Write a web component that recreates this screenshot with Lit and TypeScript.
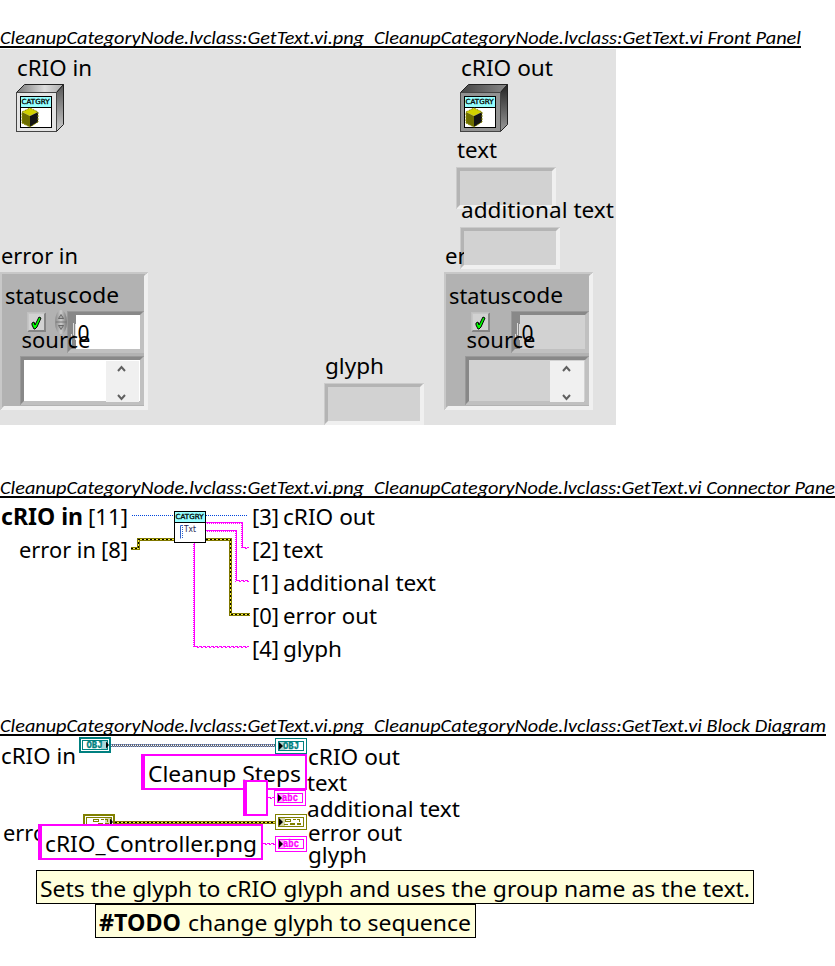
import { LitElement, html, svg, css } from "lit";
import { customElement } from "lit/decorators.js";

// One label: left edge, baseline, content, drawn width.
const t = (x: number, y: number, s: string, w: number, cls = "label") =>
  svg`<text class=${cls} x=${x} y=${y} textLength=${w} lengthAdjust="spacingAndGlyphs">${s}</text>`;

const rect = (x: number, y: number, w: number, h: number, fill: string) =>
  svg`<rect x=${x} y=${y} width=${w} height=${h} fill=${fill} />`;

// Sunken box with mitred edges: b is the edge thickness.
const bevel = (x: number, y: number, w: number, h: number, b: number, fill: string, dark: string, light: string, outer: string) => svg`
  ${rect(x, y, w, h, light)}
  <path fill=${dark} d="M${x} ${y}H${x + w}L${x + w - b} ${y + b}H${x + b}V${y + h - b}L${x} ${y + h}Z" />
  <path fill=${outer} d="M${x} ${y}H${x + w}L${x + w - 1} ${y + 1}H${x + 1}V${y + h - 1}L${x} ${y + h}Z" />
  ${rect(x + b, y + b, w - 2 * b, h - 2 * b, fill)}`;

const field = (x: number, y: number) => bevel(x, y, 100, 42, 4, "#d2d2d2", "#b4b4b4", "#f0f0f0", "#cbcbcb");

const classCube = (x: number, y: number, face: string, top: string) => svg`
  <g transform="translate(${x} ${y})">
    <path d="M.5 8.5L8.5 .5H47.5L40.5 8.5Z" fill="url(#${top})" stroke="#222" />
    <path d="M40.5 8.5L47.5 .5V40.5L40.5 47.5Z" fill="url(#${top}s)" stroke="#222" />
    <rect x=".5" y="8.5" width="40" height="39" fill=${face} stroke="#444" />
    <rect x="4.5" y="12.5" width="31" height="31" fill="#fff" stroke="#000" />
    <rect x="5" y="13" width="30" height="10" fill="#96ffff" />
    ${rect(5, 23, 30, 1, "#000")}
    ${t(5.5, 20, "CATGRY", 28, "tiny")}
    <path d="M6 28L14 24L22 28L14 32Z" fill="#d2d200" />
    <path d="M6 28L14 32V43L6 39Z" fill="#6e6e00" />
    <path d="M14 32L22 28V38L14 43Z" fill="#141414" />
    <path d="M6 28L14 24L22 28V38L14 43L6 39Z" fill="none" stroke="#8c8c00" stroke-dasharray="2 1" />
  </g>`;

const cluster = (x: number, output: boolean) => {
  const fill = output ? "#d2d2d2" : "#fff";
  const d = output ? 1 : 0;
  const w = 148 + d;
  return svg`
    ${bevel(x, 272, w, 138, 4, "#b2b2b2", "#b2b2b2", "#f0f0f0", "#c8c8c8")}
    ${rect(x, 272, w - 1, 2, "#c8c8c8")}${rect(x, 272, 2, 137, "#c8c8c8")}
    ${t(x + 5, 304, "status", 62)}
    ${bevel(x + 27, 312, 19, 20, 2, "#d2d2d2", "#c6c6c6", "#858585", "#c0c0c0")}
    <path d="M${x + 32} 323l2 -1 1 3 4 -8 2 1 -4 9 -2 2 -1 0 -2 -4Z" fill="#00ff00" stroke="#000" stroke-width="1" />
    ${bevel(x + 67, 311, 77 + d, 42, 4, fill, "#888", "#c0c0c0", "#999")}
    ${rect(x + 71, 315, 5, 34, "#888")}
    <path d="M${x + 71.5} 345V334M${x + 73.5} 335V323M${x + 75.5} 340V324" stroke="#ddd" />
    ${t(x + 67.5, 303, "code", 51.5)}
    ${t(x + 77.5, 341, "0", 12)}
    ${bevel(x + 20 + d, 356, 124, 49, 4, fill, "#888", "#c0c0c0", "#999")}
    ${rect(x + 106, 361, 33 + d, 41, "#f0f0f0")}
    <path d="M${x + 118 + d} 371l3.5 -4 3.5 4M${x + 118 + d} 395l3.5 4 3.5 -4" fill="none" stroke="#606060" stroke-width="2" />
    ${t(x + 21.5 + d, 348, "source", 69)}`;
};

const braid = (d: string) => svg`
  <path class="wire" d=${d} stroke="#ff00ff" />
  <path class="wire" d=${d} transform="translate(-1 1)" stroke="#ff00ff" stroke-dasharray="1 1" />`;

const squiggle = (d: string) => svg`
  <path class="wire" d=${d} stroke="#ff00ff" stroke-dasharray="3 1" />
  <path class="wire" d=${d} transform="translate(0 1)" stroke="#ff00ff" stroke-dasharray="2 2" stroke-dashoffset="2" />`;

const errorWire = (d: string) => svg`
  <path class="wire" d=${d} stroke="#807800" stroke-width="3" />
  <path class="wire" d=${d} stroke="#f4ef42" />
  <path class="wire" d=${d} stroke="#000" stroke-dasharray="2 2" />`;

// Block diagram terminal, 32 by 16, with its arrow on the left (sink) or on the right (source).
const terminal = (x: number, y: number, color: string, kind: string, source = false) => svg`
  <g transform="translate(${x} ${y})">
    <rect x=${source ? 1 : 0.5} y=${source ? 1 : 0.5} width=${source ? 30 : 31} height=${source ? 14 : 15} fill="#fff" stroke=${color} stroke-width=${source ? 2 : 1} />
    <rect x="3.5" y="3.5" width="25" height="9" fill="#fff" stroke=${color} />
    ${kind
      ? t(source ? 7.5 : 8, 11, kind, 16, kind === "OBJ" ? "mono teal" : "mono pink")
      : svg`<path class="wire" d="M10 5.5h5v2h-5zM18 5.5h3M22 5.5h2v2M9 10.5h4M15 9.5h4v1h-4M22 9.5h3v1h-3z" stroke=${color} />`}
    ${rect(source ? 22 : 3, 3, 7, 10, color + "55")}
    <path d=${source ? "M27 4.5L30 8L27 11.5Z" : "M4 4L8 8L4 12Z"} fill="#000" />
  </g>`;

const constant = (x: number, y: number, w: number) => svg`
  ${rect(x, y, w, 36, "#ff00ff")}${rect(x + 4, y + 2, w - 6, 32, "#fff")}`;

const note = (x: number, y: number, w: number) =>
  svg`<rect x=${x + 0.5} y=${y + 0.5} width=${w - 1} height="33" fill="#ffffdc" stroke="#000" />`;

@customElement("app-root")
export class AppRoot extends LitElement {
  static styles = css`
    :host { display: block; width: 835px; height: 966px; overflow: hidden; background: #fff; }
    main { display: flex; flex-direction: column; }
    h2 { margin: 0; height: 28px; font-weight: 400; }
    svg { display: block; }
    .first { padding-top: 20px; }
    .label, .bold { font-family: "Noto Sans", "Open Sans", sans-serif; font-size: 22.5px; fill: #000; white-space: pre; }
    .bold { font-weight: 700; }
    .title { font-family: Carlito, Lato, sans-serif; font-style: italic; font-size: 18.5px; fill: #000; white-space: pre; }
    .tiny { font-family: "DejaVu Sans", sans-serif; font-size: 7px; fill: #000; stroke: #000; stroke-width: 0.3px; }
    .small { font-family: "DejaVu Sans", sans-serif; font-size: 8.5px; fill: #1e1e50; }
    .mono { font-family: "Liberation Mono", monospace; font-weight: 700; font-size: 10px; stroke-width: 0.3px; }
    .teal { fill: #008080; stroke: #008080; }
    .pink { fill: #ff00ff; stroke: #ff00ff; }
    .wire { fill: none; shape-rendering: crispEdges; }
  `;

  private heading(kind: string, width: number) {
    return html`<h2><svg width="835" height="28" viewBox="0 0 835 28">
      ${t(0, 24, "CleanupCategoryNode.lvclass:GetText.vi.png", 364, "title")}
      ${t(374, 24, "CleanupCategoryNode.lvclass:GetText.vi " + kind, width - 374, "title")}
      ${rect(0, 26, width, 2, "#000")}
    </svg></h2>`;
  }

  private frontPanel() {
    return html`<svg width="835" height="422" viewBox="0 48 835 422">
      <defs>
        <linearGradient id="lt"><stop offset="0" stop-color="#777" /><stop offset=".6" stop-color="#ddd" /><stop offset="1" stop-color="#aaa" /></linearGradient>
        <linearGradient id="lts" x2="0" y2="1"><stop offset="0" stop-color="#555" /><stop offset="1" stop-color="#ccc" /></linearGradient>
        <linearGradient id="dk"><stop offset="0" stop-color="#444" /><stop offset="1" stop-color="#888" /></linearGradient>
        <linearGradient id="dks" x2="0" y2="1"><stop offset="0" stop-color="#222" /><stop offset="1" stop-color="#999" /></linearGradient>
        <linearGradient id="knob"><stop offset="0" stop-color="#888" /><stop offset=".5" stop-color="#ccc" /><stop offset="1" stop-color="#777" /></linearGradient>
      </defs>
      ${rect(0, 49, 616, 376, "#e2e2e2")}
      ${t(17, 76, "cRIO in", 75)}
      ${classCube(16, 84, "#e4e4e4", "lt")}
      ${t(461, 76, "cRIO out", 92)}
      ${classCube(460, 84, "#929292", "dk")}
      ${t(457, 158, "text", 40)}
      ${field(456, 167)}
      ${t(461, 218, "additional text", 153)}
      ${field(460, 227)}
      ${t(445, 264, "error out", 94)}
      ${rect(464, 231, 92, 34, "#d2d2d2")}
      ${t(1, 264, "error in", 77)}
      ${cluster(0, false)}
      <ellipse cx="61" cy="322" rx="6" ry="12" fill="url(#knob)" />
      <path d="M58.5 318.5L61 314.5L63.5 318.5ZM58.5 325.5L61 329.5L63.5 325.5Z" fill="#aaa" stroke="#555" stroke-width=".8" />
      <path d="M56 322H66" stroke="#777" />
      ${cluster(444, true)}
      ${t(325, 374, "glyph", 59)}
      ${field(324, 383)}
    </svg>`;
  }

  private connectorPane() {
    const outs: [string, string, number][] = [
      ["[3]", "cRIO out", 92], ["[2]", "text", 40], ["[1]", "additional text", 153], ["[0]", "error out", 94], ["[4]", "glyph", 59],
    ];
    return html`<svg width="835" height="210" viewBox="0 498 835 210">
      ${t(1, 525, "cRIO in", 82, "bold")}${t(88, 525, "[11]", 40)}
      ${t(19, 558, "error in", 77)}${t(101, 558, "[8]", 27)}
      <path class="wire" d="M132 515.5H174M206 515.5H248" stroke="#0046dc" stroke-dasharray="1 1" />
      ${braid("M206 522.5H242.5V548")}${squiggle("M243 547.5H249")}
      ${braid("M206 530.5H236.5V581")}${squiggle("M237 580.5H249")}
      ${braid("M194.5 543V647")}${squiggle("M195 646.5H249")}
      ${errorWire("M131 548.5H138.5V539.5H174")}
      ${errorWire("M206 539.5H230.5V614.5H250")}
      <rect x="174.5" y="511.5" width="31" height="31" fill="#fff" stroke="#000" />
      ${rect(175, 512, 30, 10, "#96ffff")}${rect(175, 522, 30, 1, "#000")}
      ${t(175.5, 519, "CATGRY", 28, "tiny")}
      <path d="M183 525.5H180.5V538.5" fill="none" stroke="#3264c8" /><path class="wire" d="M182.5 527V539" stroke="#3264c8" stroke-dasharray="1 1" />
      ${t(184, 532, "Txt", 12, "small")}
      ${outs.map(([n, s, w], i) => svg`${t(252, 525 + i * 33, n, 27)}${t(283, 525 + i * 33, s, w)}`)}
    </svg>`;
  }

  private blockDiagram() {
    return html`<svg width="835" height="230" viewBox="0 736 835 230">
      ${t(1, 764, "cRIO in", 75)}
      ${t(3, 841, "error in", 77)}
      <path class="wire" d="M111 745.5H275" stroke="#666" stroke-width="3" />
      <path class="wire" d="M111 745.5H275" stroke="#fff" stroke-dasharray="1 1" />
      <path class="wire" d="M111 744.5H275M112 746.5H275" stroke="#7896dc" stroke-dasharray="1 1" />
      ${terminal(79, 737, "#008080", "OBJ", true)}
      ${terminal(275, 738, "#008080", "OBJ")}
      ${errorWire("M115 822.5H275")}
      ${terminal(83, 814, "#808000", "", true)}
      ${terminal(275, 814, "#808000", "")}
      ${constant(141, 754, 166)}
      ${t(148, 782, "Cleanup Steps", 153)}
      ${squiggle("M268 797.5H274")}
      ${constant(243, 780, 25)}
      ${terminal(274, 790, "#ff00ff", "abc")}
      ${constant(38, 824, 225)}
      ${t(45, 852, "cRIO_Controller.png", 212)}
      ${squiggle("M263 843.5H275")}
      ${terminal(275, 836, "#ff00ff", "abc")}
      ${t(308, 765, "cRIO out", 92)}
      ${t(307, 791, "text", 40)}
      ${t(307, 817, "additional text", 153)}
      ${t(308, 841, "error out", 94)}
      ${t(308, 863, "glyph", 59)}
      ${note(36, 870, 718)}
      ${t(40, 897, "Sets the glyph to cRIO glyph and uses the group name as the text.", 710)}
      ${note(95, 904, 381)}
      ${t(99, 931, "#TODO", 82, "bold")}${t(188, 931, "change glyph to sequence", 283)}
    </svg>`;
  }

  render() {
    return html`<main>
      <section class="first">${this.heading("Front Panel", 801)}${this.frontPanel()}</section>
      <section>${this.heading("Connector Pane", 835)}${this.connectorPane()}</section>
      <section>${this.heading("Block Diagram", 826)}${this.blockDiagram()}</section>
    </main>`;
  }
}
